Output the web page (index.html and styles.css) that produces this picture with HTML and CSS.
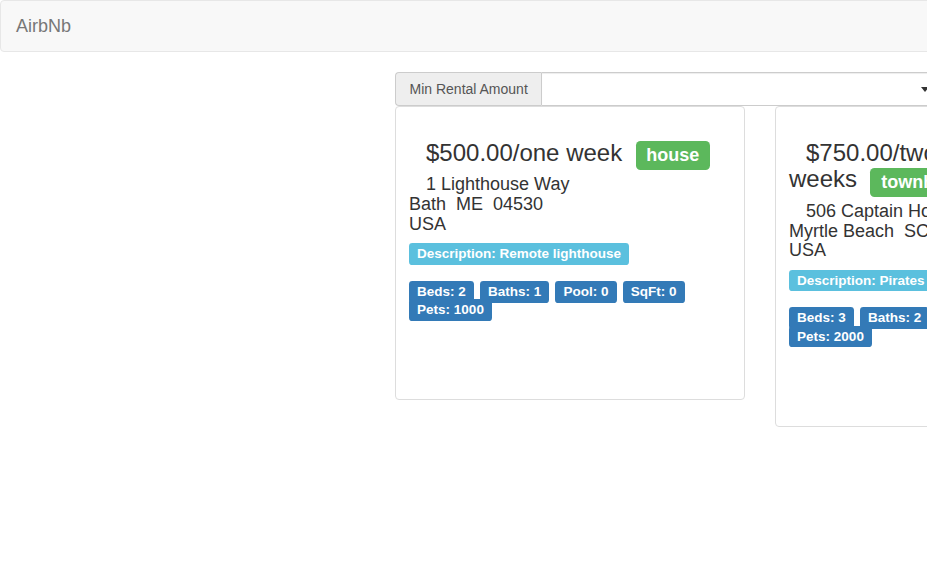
FILE: index.html
```html
<!DOCTYPE html>
<html lang="en">
<head>
<meta charset="utf-8">
<title>AirbNb</title>
<link rel="stylesheet" href="styles.css">
</head>
<body>
<nav class="navbar"><span class="brand">AirbNb</span></nav>
<div class="layout">
  <aside class="sidebar"></aside>
  <main class="main">
    <div class="input-group">
      <span class="addon">Min Rental Amount</span>
      <div class="select"><span class="caret"></span></div>
    </div>
    <div class="cards">
      <div class="card">
        <h3 class="price">$500.00/one week&nbsp;&nbsp;<span class="label label-success">house</span></h3>
        <h4 class="address">1 Lighthouse Way<br>Bath&nbsp; ME&nbsp; 04530<br>USA</h4>
        <div class="desc"><span class="label label-info">Description: Remote lighthouse</span></div>
        <div class="features"><span class="label label-primary">Beds: 2</span> <span class="label label-primary">Baths: 1</span> <span class="label label-primary">Pool: 0</span> <span class="label label-primary">SqFt: 0</span> <span class="label label-primary">Pets: 1000</span></div>
      </div>
      <div class="card">
        <h3 class="price">$750.00/two weeks&nbsp;&nbsp;<span class="label label-success">townhouse</span></h3>
        <h4 class="address">506 Captain Hook Way<br>Myrtle Beach&nbsp; SC&nbsp; 29577<br>USA</h4>
        <div class="desc"><span class="label label-info">Description: Pirates cove</span></div>
        <div class="features"><span class="label label-primary">Beds: 3</span> <span class="label label-primary">Baths: 2</span> <span class="label label-primary">Pool: 1</span> <span class="label label-primary">SqFt: 0</span> <span class="label label-primary">Pets: 2000</span></div>
      </div>
    </div>
  </main>
</div>
</body>
</html>
```
FILE: styles.css
```css
html {
  overflow: hidden;
}
body {
  margin: 0;
  min-width: 1300px;
  font-family: "Liberation Sans", Arial, Helvetica, sans-serif;
  font-size: 14px;
  line-height: 1.42857;
  color: #333;
  background: #fff;
}
.navbar {
  height: 50px;
  background: #f8f8f8;
  border: 1px solid #e7e7e7;
  border-radius: 4px;
  margin-bottom: 20px;
}
.brand {
  display: block;
  width: max-content;
  padding: 15px;
  font-size: 18px;
  line-height: 20px;
  color: #777;
}
.layout {
  display: flex;
}
.sidebar {
  width: 395px;
  flex: none;
}
.main {
  flex: none;
  width: 800px;
}
.input-group {
  display: flex;
  width: 541px;
  height: 34px;
}
.addon {
  padding: 6px 13.5px;
  font-size: 14px;
  line-height: 20px;
  color: #555;
  background: #eee;
  border: 1px solid #ccc;
  border-right: 0;
  border-radius: 4px 0 0 4px;
}
.select {
  flex: 1;
  display: flex;
  align-items: center;
  justify-content: flex-end;
  padding-right: 6px;
  border: 1px solid #ccc;
  border-radius: 0 4px 4px 0;
  background: #fff;
  box-shadow: inset 0 1px 1px rgba(0,0,0,.075);
}
.caret {
  width: 0;
  height: 0;
  border-left: 4px solid transparent;
  border-right: 4px solid transparent;
  border-top: 5px solid #333;
}
.cards {
  display: flex;
  align-items: flex-start;
  gap: 30px;
}
.card {
  box-sizing: border-box;
  width: 350px;
  flex: none;
  border: 1px solid #ddd;
  border-radius: 4px;
  padding: 13px 13px 82px;
}
.price {
  margin: 20px 0 0;
  font-size: 24px;
  font-weight: normal;
  line-height: 26.4px;
  text-indent: 17px;
}
.address {
  margin: 9px 0 0;
  font-size: 18px;
  font-weight: normal;
  line-height: 19.8px;
  text-indent: 17px;
}
.desc {
  margin-top: 8px;
  font-size: 18px;
  line-height: 19.8px;
}
.features {
  margin-top: 18px;
  font-size: 18px;
  line-height: 18.3px;
}
.label {
  display: inline;
  padding: .2em .6em .3em;
  font-size: 75%;
  font-weight: bold;
  line-height: 1;
  color: #fff;
  white-space: nowrap;
  vertical-align: baseline;
  border-radius: .25em;
  text-indent: 0;
}
.features .label {
  margin-right: 1px;
}
.label-success { background: #5cb85c; }
.label-info { background: #5bc0de; }
.label-primary { background: #337ab7; }
```
